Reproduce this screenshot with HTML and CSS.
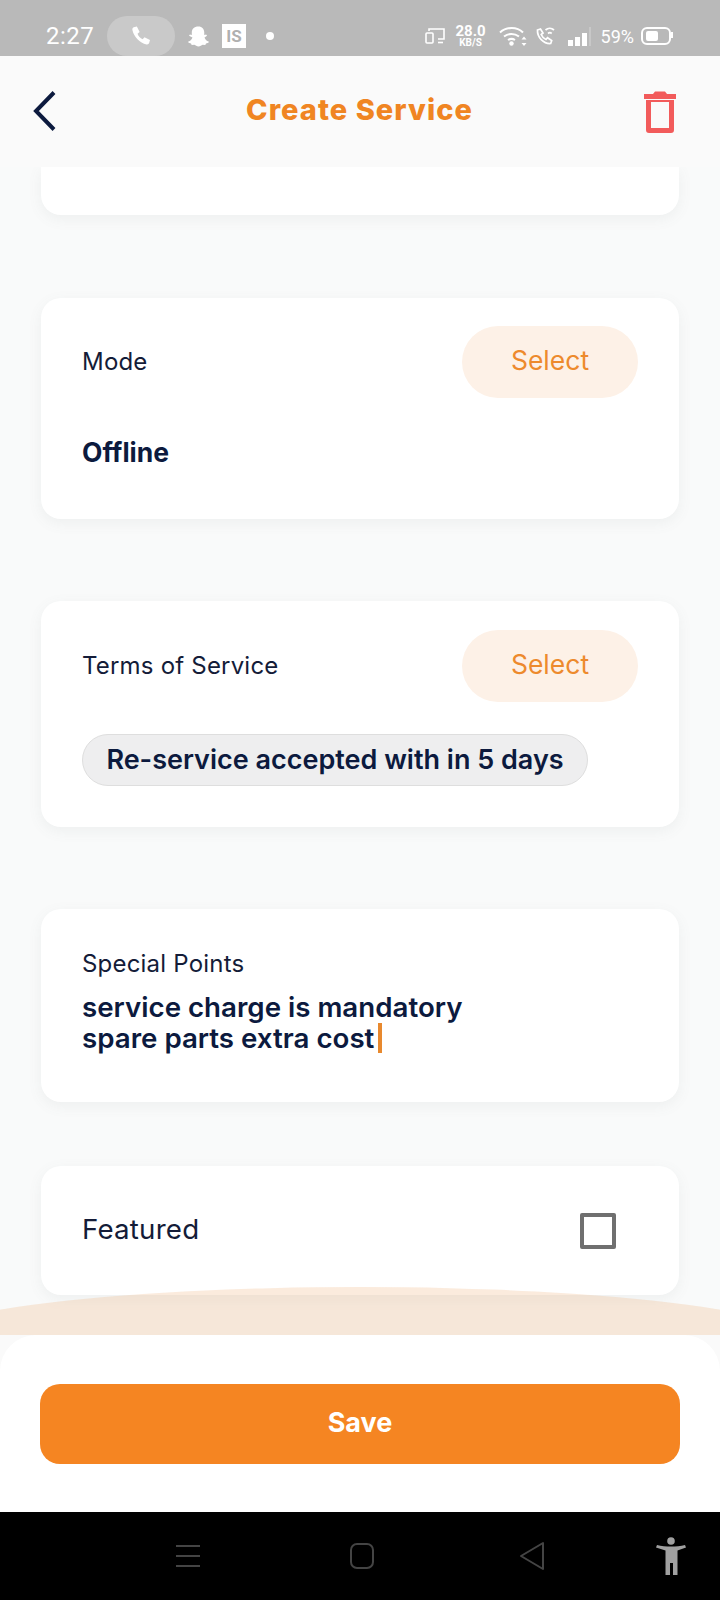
FILE: index.html
```html
<!DOCTYPE html>
<html lang="en">
<head>
  <meta charset="UTF-8">
  <title>Create Service</title>
  <link rel="stylesheet" href="styles.css">
</head>
<body>

  <!-- Status bar -->
  <div class="status">
    <div class="status-left">
      <span class="time">2:27</span>
      <span class="call-pill">
        <svg width="22" height="22" viewBox="0 0 24 24"><path d="M4 2.500l3.500-1 3 6-2.300 2c.9 2.400 3 4.800 5.600 6l2-2.200 6 3-.9 3.400c-.4 1.200-1.600 1.800-2.800 1.500C10.500 19.500 4.500 13.500 2.600 5.500 2.400 4.200 2.900 3 4 2.500z" fill="#fff"/></svg>
      </span>
      <svg class="snap" width="23" height="23" viewBox="0 0 24 24"><path d="M12 1.500c3.700 0 6 2.700 6 6.300v2.600l2-.5.900 1.300-2.600 1.800c.6 2 2 3.500 4.400 4.200l-.3 1.300-2.600.7-.7 1.600-2.800-.2c-1.400.4-2.400 1.800-4.300 1.800s-2.900-1.400-4.300-1.800l-2.800.2-.7-1.600-2.600-.7-.3-1.300c2.400-.7 3.800-2.200 4.400-4.200L2.100 11.200 3 9.900l2 .5V7.800c0-3.600 2.300-6.300 7-6.300z" fill="#fff"/></svg>
      <span class="is-badge">IS</span>
      <span class="dot"></span>
    </div>
    <div class="status-right">
      <svg class="ic-device" width="20" height="16" viewBox="0 0 20 16" fill="none" stroke="#fff" stroke-width="1.600"><path d="M4 3V1h15v10h-6"/><rect x="1" y="5" width="7" height="10" rx="1"/><path d="M13 14.500h5"/></svg>
      <div class="speed"><b>28.0</b><b class="unit">KB/S</b></div>
      <svg class="ic-wifi" width="28" height="20" viewBox="0 0 28 20" fill="none" stroke="#fff" stroke-width="2"><path d="M1 6.500c6.500-6 17-6 23 0M5 10.500c4.500-3.500 10.500-3.500 15 0M9 14c2-1.300 5-1.300 7 0"/><circle cx="12.500" cy="17.500" r="2.200" fill="#fff" stroke="none"/><path d="M25 10.500l-2.500 3h5zM25 20l-2.500-3h5z" fill="#fff" stroke="none"/></svg>
      <svg class="ic-call" width="20" height="20" viewBox="0 0 20 20" fill="none" stroke="#fff" stroke-width="1.700"><path d="M1.500 4l3-1 2.500 4-1.800 1.500c.9 2.300 2.700 4.100 4.800 5l1.500-1.800 4.200 2.800-1 3C7.500 18 1 11 1.500 4z"/><path d="M9.500 4c2.500-2.300 6-2.300 8.500 0M12 7.500c1.200-1 2.500-1 3.700 0"/></svg>
      <div class="signal"><i class="s1"></i><i class="s2"></i><i class="s3"></i><i class="s4"></i></div>
      <span class="battery-text">59%</span>
      <div class="battery"><div class="battery-fill"></div></div>
    </div>
  </div>

  <!-- Header -->
  <div class="header">
    <svg width="32" height="44" viewBox="0 0 32 44" fill="none"><path d="M27 2.500L9 21l18 18.500" stroke="#0c1a3e" stroke-width="4"/></svg>
    <h1>Create Service</h1>
    <svg width="36" height="44" viewBox="0 0 36 44"><path d="M2 4h32v5H2zM11 4l2-2.500h10L25 4z" fill="#f25b5b"/><path d="M4 10h28v30c0 2-1 3-3 3H7c-2 0-3-1-3-3zm5 2v26h18V12z" fill="#f25b5b" fill-rule="evenodd"/></svg>
  </div>

  <!-- Form -->
  <div class="content">
    <div class="card card-top"></div>

    <div class="card card-mode">
      <div class="row">
        <span class="label">Mode</span>
        <button class="select-btn">Select</button>
      </div>
      <div class="value">Offline</div>
    </div>

    <div class="card card-terms">
      <div class="row">
        <span class="label">Terms of Service</span>
        <button class="select-btn">Select</button>
      </div>
      <span class="chip">Re-service accepted with in 5 days</span>
    </div>

    <div class="card card-points">
      <div class="label">Special Points</div>
      <div class="value multi">service charge is mandatory<br>spare parts extra cost <span class="caret"></span></div>
    </div>

    <div class="card card-featured">
      <span class="label label-big">Featured</span>
      <span class="checkbox"></span>
    </div>

    <div class="arc"></div>
  </div>

  <!-- Save -->
  <div class="footer">
    <button class="save-btn">Save</button>
  </div>

  <!-- Navigation bar -->
  <div class="navbar">
    <svg width="26" height="24" viewBox="0 0 26 24" stroke="#444" stroke-width="2"><path d="M1 2h24M1 12h24M1 22h24"/></svg>
    <svg class="nav-home" width="26" height="28" viewBox="0 0 26 28" fill="none" stroke="#444" stroke-width="2"><rect x="2" y="2" width="22" height="24" rx="6"/></svg>
    <svg class="nav-back" width="26" height="30" viewBox="0 0 26 30" fill="none" stroke="#444" stroke-width="2" stroke-linejoin="round"><path d="M24 2v26L2 15z"/></svg>
    <svg class="nav-access" width="32" height="38" viewBox="0 0 32 38"><circle cx="16" cy="4" r="3.800" fill="#a0a0a0"/><path d="M1 10.500l1-2.500c8.500 2 19.500 2 28 0l1 2.500-8.500 3V38h-4.500V26h-3v12H10.500V13.500z" fill="#a0a0a0"/></svg>
  </div>

</body>
</html>
```

FILE: styles.css
```css
body {
  font-family: Inter, "Liberation Sans", sans-serif;
  background: #fafafa;
  margin: 0;
  width: 720px;
  height: 1600px;
  display: flex;
  flex-direction: column;
  overflow: hidden;
  color: #0c1a3e;
}

/* status bar */
.status {
  height: 56px;
  background: #b9b9b9;
  display: flex;
  justify-content: space-between;
  padding: 0 49px 0 46px;
  color: #fff;
  box-sizing: border-box;
  flex-shrink: 0;
}
.status-left, .status-right {
  display: flex;
  align-items: center;
  padding-top: 16px;
}
.time {
  font-family: Roboto, sans-serif;
  font-size: 24px;
  letter-spacing: 0.5px;
  width: 61px;
}
.call-pill {
  width: 68px;
  height: 40px;
  border-radius: 20px;
  background: #c9c9c9;
  display: flex;
  align-items: center;
  justify-content: center;
}
.snap {
  margin-left: 12px;
}
.is-badge {
  width: 24px;
  height: 24px;
  margin-left: 12px;
  background: #fff;
  color: #b0b0b0;
  font-family: Roboto, sans-serif;
  font-weight: 700;
  font-size: 17px;
  line-height: 24px;
  text-align: center;
}
.dot {
  width: 8px;
  height: 8px;
  border-radius: 50%;
  background: #fff;
  margin-left: 20px;
}
.speed {
  display: flex;
  flex-direction: column;
  align-items: center;
  width: 32px;
  margin: 0 12px 0 10px;
  font-family: Roboto, sans-serif;
  font-size: 15px;
  line-height: 14px;
}
.speed .unit {
  font-size: 10px;
  line-height: 10px;
}
.ic-call {
  margin-left: 9px;
}
.signal {
  display: flex;
  align-items: flex-end;
  gap: 2px;
  height: 20px;
  margin: 0 10px 0 12px;
}
.signal i {
  width: 5px;
  background: #fff;
}
.signal .s1 { height: 6px; }
.signal .s2 { height: 9px; }
.signal .s3 { height: 13px; }
.signal .s4 { height: 19px; width: 2px; background: #c8c8c8; }
.battery-text {
  font-family: Roboto, sans-serif;
  font-size: 18px;
  margin-right: 7px;
}
.battery {
  width: 30px;
  height: 18px;
  box-sizing: border-box;
  border: 2px solid #fff;
  border-radius: 6px;
  padding: 2px 3px;
  position: relative;
}
.battery:after {
  content: "";
  position: absolute;
  right: -4px;
  top: 3px;
  width: 2px;
  height: 6px;
  background: #fff;
}
.battery-fill {
  width: 12px;
  height: 100%;
  background: #fff;
  border-radius: 2px;
}

/* header */
.header {
  height: 111px;
  background: #fafafa;
  display: flex;
  align-items: center;
  justify-content: space-between;
  padding: 0 42px 0 27px;
  box-sizing: border-box;
  flex-shrink: 0;
  position: relative;
  z-index: 2;
}
.header h1 {
  font-size: 29px;
  font-weight: 800;
  letter-spacing: 1.05px;
  color: #f08522;
  margin: 0 0 4px 18px;
}

/* form */
.content {
  flex: 1;
  position: relative;
  overflow: hidden;
  padding: 0 41px;
  background: #f9fafa;
}
.card {
  background: #fff;
  border-radius: 20px;
  box-shadow: 0 4px 14px rgba(100,120,120,0.08);
  box-sizing: border-box;
  padding: 0 41px;
}
.card-top {
  height: 48px;
  margin-bottom: 83px;
  border-radius: 0 0 20px 20px;
}
.card-mode {
  height: 221px;
  padding-top: 28px;
  margin-bottom: 82px;
}
.card-terms {
  height: 226px;
  padding-top: 29px;
  margin-bottom: 82px;
}
.card-points {
  height: 193px;
  padding-top: 41px;
  margin-bottom: 64px;
}
.card-featured {
  height: 129px;
  display: flex;
  align-items: center;
  justify-content: space-between;
  padding-right: 63px;
}
.row {
  display: flex;
  align-items: center;
  justify-content: space-between;
}
.label {
  font-size: 24px;
  letter-spacing: 0.2px;
  line-height: 28px;
  color: #141c38;
}
.label-big {
  font-size: 27.7px;
  margin-bottom: 4px;
}
.select-btn {
  width: 176px;
  height: 72px;
  margin-right: 0;
  padding: 0 0 4px;
  border: none;
  border-radius: 36px;
  background: #fdf1e7;
  color: #ed8a2d;
  font-family: inherit;
  font-size: 26.5px;
}
.value {
  font-size: 26.5px;
  font-weight: 700;
  margin-top: 37px;
  line-height: 34px;
}
.value.multi {
  margin-top: 14px;
  line-height: 31px;
  font-size: 27.7px;
  font-weight: 600;
}
.caret {
  display: inline-block;
  width: 4px;
  height: 30px;
  margin-left: -3px;
  background: #e8892e;
  vertical-align: -5px;
}
.chip {
  display: inline-block;
  margin-top: 32px;
  height: 52px;
  line-height: 50px;
  width: 506px;
  box-sizing: border-box;
  text-align: center;
  background: #eeeeef;
  border: 1px solid #dedede;
  border-radius: 26px;
  font-size: 27px;
  font-weight: 600;
  white-space: nowrap;
}
.checkbox {
  width: 36px;
  height: 36px;
  border: 4px solid #6f6f6f;
  border-radius: 2px;
  box-sizing: border-box;
}
.arc {
  position: absolute;
  left: -100px;
  right: -100px;
  top: 1120px;
  height: 120px;
  border-radius: 50%;
  background: rgba(240,175,120,0.25);
}

/* save */
.footer {
  height: 177px;
  background: #fff;
  border-radius: 36px 36px 0 0;
  padding: 49px 40px 0;
  box-sizing: border-box;
  flex-shrink: 0;
  position: relative;
  z-index: 1;
}
.save-btn {
  width: 100%;
  height: 80px;
  padding: 0 0 4px;
  border: none;
  border-radius: 20px;
  background: #f58522;
  color: #fff;
  font-family: inherit;
  font-size: 27px;
  font-weight: 700;
}

/* nav bar */
.navbar {
  height: 88px;
  background: #000;
  flex-shrink: 0;
  display: flex;
  align-items: center;
  padding-left: 175px;
}
.nav-home {
  margin-left: 148px;
}
.nav-back {
  margin-left: 144px;
}
.nav-access {
  margin-left: 110px;
}
```
